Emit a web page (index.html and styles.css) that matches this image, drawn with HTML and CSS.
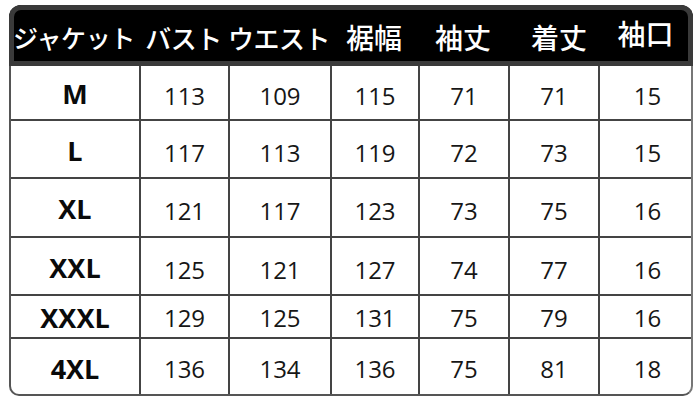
FILE: index.html
```html
<!DOCTYPE html>
<html lang="ja">
<head>
<meta charset="utf-8">
<link rel="stylesheet" href="styles.css">
</head>
<body>
<div class="chart">
  <div class="head">
    <div class="hc kana-tight">ジャケット</div>
    <div class="hc">バスト</div>
    <div class="hc">ウエスト</div>
    <div class="hc kanji">裾幅</div>
    <div class="hc kanji">袖丈</div>
    <div class="hc kanji hc-shift">着丈</div>
    <div class="hc kanji hc-up">袖口</div>
  </div>
  <div class="grid">
    <div class="c size r1">M</div><div class="c r1">113</div><div class="c r1">109</div><div class="c r1">115</div><div class="c r1">71</div><div class="c r1">71</div><div class="c last r1">15</div>
    <div class="c size r2">L</div><div class="c r2">117</div><div class="c r2">113</div><div class="c r2">119</div><div class="c r2">72</div><div class="c r2">73</div><div class="c last r2">15</div>
    <div class="c size r3">XL</div><div class="c r3">121</div><div class="c r3">117</div><div class="c r3">123</div><div class="c r3">73</div><div class="c r3">75</div><div class="c last r3">16</div>
    <div class="c size r4">XXL</div><div class="c r4">125</div><div class="c r4">121</div><div class="c r4">127</div><div class="c r4">74</div><div class="c r4">77</div><div class="c last r4">16</div>
    <div class="c size r5">XXXL</div><div class="c r5">129</div><div class="c r5">125</div><div class="c r5">131</div><div class="c r5">75</div><div class="c r5">79</div><div class="c last r5">16</div>
    <div class="c size bottom r6">4XL</div><div class="c bottom r6">136</div><div class="c bottom r6">134</div><div class="c bottom r6">136</div><div class="c bottom r6">75</div><div class="c bottom r6">81</div><div class="c last bottom r6">18</div>
  </div>
</div>
</body>
</html>
```
FILE: styles.css
```css
html, body {
  margin: 0;
  padding: 0;
  background: #ffffff;
}
body {
  padding: 5px 0 0 9px;
  width: 700px;
  height: 406px;
  box-sizing: border-box;
  overflow: hidden;
}
.chart {
  width: 684px;
}
.head {
  display: grid;
  grid-template-columns: 130px 89px 102px 88px 90px 90px 95px;
  height: 61px;
  background: #000;
  box-shadow: inset 0 0 0 5px #3a3a3a;
  border-radius: 12px 12px 0 0;
}
.hc {
  display: flex;
  align-items: center;
  justify-content: center;
  color: #fff;
  font-family: "Noto Sans CJK JP", sans-serif;
  font-size: 26px;
  font-weight: 500;
  padding-top: 3px;
  letter-spacing: -0.5px;
}
.kana-tight {
  font-size: 25px;
  letter-spacing: -0.4px;
}
.kanji {
  font-size: 28px;
  letter-spacing: 0;
}
.hc-shift {
  padding-left: 12px;
}
.hc-up {
  padding-bottom: 8px;
}
.grid {
  display: grid;
  grid-template-columns: 130px 89px 102px 88px 90px 90px 95px;
  grid-template-rows: 55px 58px 59px 58px 43px 55px;
  border-left: 2px solid #555;
  border-bottom: 2px solid #555;
  border-right: 2px solid #777;
  border-radius: 0 0 10px 10px;
  box-sizing: border-box;
  overflow: hidden;
}
.c {
  display: flex;
  align-items: center;
  justify-content: center;
  font-family: "Open Sans", sans-serif;
  font-size: 24px;
  font-weight: 500;
  color: #161616;
  border-right: 2px solid #444;
  border-bottom: 2px solid #444;
  padding-top: 6px;
  box-sizing: border-box;
}
.c.last {
  border-right: none;
}
.c.bottom {
  border-bottom: none;
}
.size {
  font-weight: 700;
  font-size: 27px;
  color: #0a0a0a;
  padding-top: 2px;
}
.r5 {
  padding-top: 2px;
}
.r6 {
  padding-top: 4px;
}
```
